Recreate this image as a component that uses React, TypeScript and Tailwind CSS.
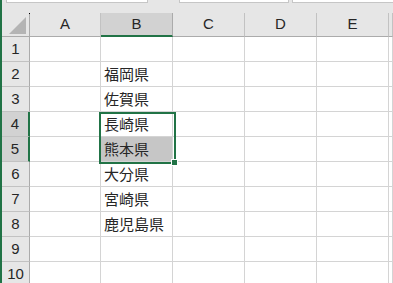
import React from "react";

const cols = ["A", "B", "C", "D", "E", ""];
const data: Record<number, string> = {
  2: "福岡県",
  3: "佐賀県",
  4: "長崎県",
  5: "熊本県",
  6: "大分県",
  7: "宮崎県",
  8: "鹿児島県",
};
const rows = [1, 2, 3, 4, 5, 6, 7, 8, 9, 10];

export default function App() {
  return (
    <div className="w-[393px] h-[283px] overflow-hidden bg-white border-l-2 border-[#217346] font-['Liberation_Sans','Noto_Sans_CJK_JP',sans-serif] text-[#222]">
      {/* 数式バーの下端 */}
      <div className="h-[13px] bg-[#e6e6e6] flex items-start">
        <div className="ml-[4px] w-[142px] h-[3px] bg-white border-x border-b border-[#c6c6c6]" />
        <div className="ml-[31px] w-[110px] h-[3px] bg-white border-x border-b border-[#c6c6c6]" />
        <div className="ml-[3px] flex-1 h-[3px] bg-white border-l border-b border-[#c6c6c6]" />
      </div>

      <div className="relative grid grid-cols-[28px_71px_72px_72px_72px_72px_1fr] grid-rows-[24px_repeat(10,25px)]">
        {/* 左上の角 */}
        <div className="relative bg-[#e6e6e6] border-r border-b border-[#ababab]">
          <svg className="absolute left-0 top-0" width="28" height="24">
            <polygon points="7,21 24,21 24,4" fill="#b4b4b4" />
            <rect x="27" y="0" width="1" height="1" fill="#000" />
          </svg>
        </div>
        {cols.map((c) => (
          <div
            key={c || "x"}
            className={
              c === "B"
                ? "bg-[#d2d2d2] border-r border-[#ababab] border-b-2 border-b-[#217346] flex items-center justify-center text-[15px] text-[#262626]"
                : "bg-[#e6e6e6] border-r border-b border-[#c2c2c2] border-b-[#ababab] flex items-center justify-center text-[15px] text-[#262626]"
            }
          >
            {c}
          </div>
        ))}

        {rows.map((r) => (
          <React.Fragment key={r}>
            <div
              className={
                r === 4 || r === 5
                  ? "bg-[#d2d2d2] border-r-2 border-[#217346] border-b border-b-[#c2c2c2] flex items-center justify-center text-[15px] text-[#262626]"
                  : "bg-[#e6e6e6] border-r border-[#ababab] border-b border-b-[#c2c2c2] flex items-center justify-center text-[15px] text-[#262626]"
              }
            >
              {r}
            </div>
            {cols.map((c) => (
              <div
                key={c || "x"}
                className={
                  c === "B" && r === 5
                    ? "bg-[#c6c6c6] border-r border-b border-[#d4d4d4] flex items-center pl-[3px] text-[15px] font-['Noto_Sans_CJK_JP',sans-serif] text-[#262626] whitespace-nowrap"
                    : "border-r border-b border-[#d4d4d4] flex items-center pl-[3px] text-[15px] font-['Noto_Sans_CJK_JP',sans-serif] text-[#262626] whitespace-nowrap"
                }
              >
                {c === "B" ? data[r] ?? "" : ""}
              </div>
            ))}
          </React.Fragment>
        ))}

        {/* 選択範囲 B4:B5 */}
        <div className="absolute left-[97px] top-[99px] w-[77px] h-[52px] border-2 border-[#217346] pointer-events-none" />
        <div className="absolute left-[169px] top-[146px] w-[7px] h-[7px] bg-[#217346] border border-white" />
      </div>
    </div>
  );
}
